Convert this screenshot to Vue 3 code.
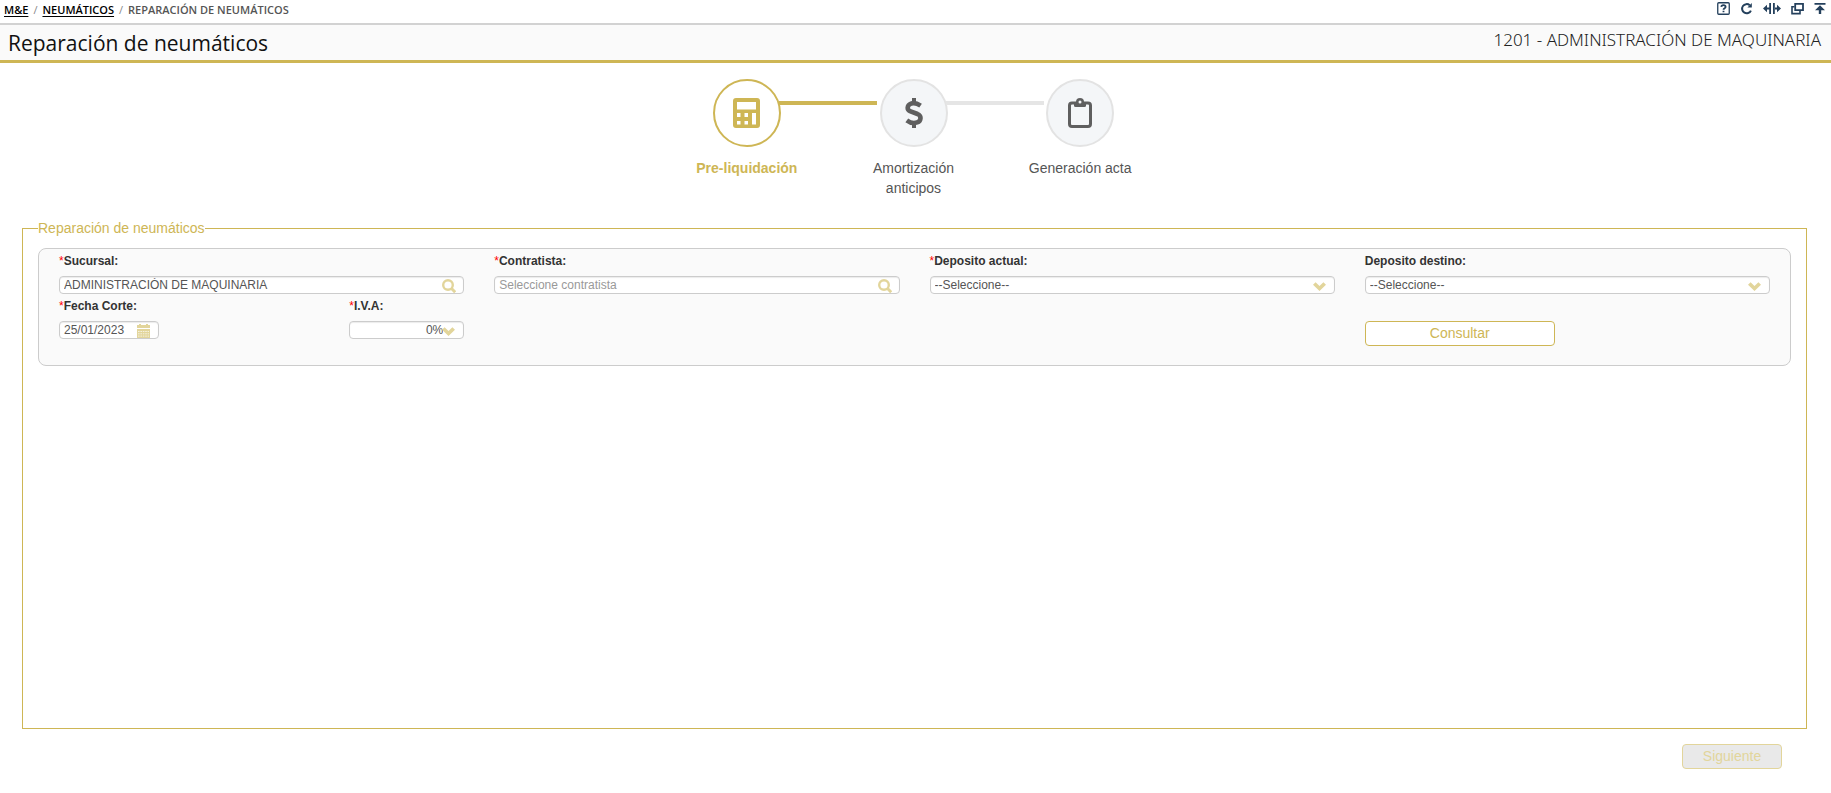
<script setup>
import { ref } from 'vue'

const steps = [
  { id: 'calc', label: 'Pre-liquidación', active: true },
  { id: 'money', label: 'Amortización anticipos', active: false },
  { id: 'clip', label: 'Generación acta', active: false },
]

const sucursal = ref('ADMINISTRACIÓN DE MAQUINARIA')
const contratista = ref('')
const fecha = ref('25/01/2023')
</script>

<template>
  <div class="page">
    <header>
      <div class="topbar">
        <nav class="crumbs" aria-label="Ruta">
          <a href="#">M&amp;E</a><span class="sep">/</span><a href="#">NEUMÁTICOS</a><span class="sep">/</span><span>REPARACIÓN DE NEUMÁTICOS</span>
        </nav>
        <div class="tools">
          <button type="button" aria-label="Ayuda">
            <svg width="13" height="13" viewBox="0 0 13 13" fill="none" stroke="currentColor">
              <rect x="0.75" y="0.75" width="11.5" height="11.5" rx="1" stroke-width="1.3" />
              <path d="M4.3 4.9C4.4 2.6 8.6 2.6 8.6 4.9C8.6 6.2 6.5 6.2 6.5 7.7M6.5 8.8V10.3" stroke-width="1.8" />
            </svg>
          </button>
          <button type="button" aria-label="Recargar">
            <svg width="13" height="13" viewBox="0 0 13 13">
              <path d="M10.9 8.6A4.6 4.6 0 1 1 9.7 3.2" fill="none" stroke="currentColor" stroke-width="2" />
              <path d="M11.8 1V5.4H7.4Z" fill="currentColor" />
            </svg>
          </button>
          <button type="button" aria-label="Ajustar ancho">
            <svg width="18" height="13" viewBox="0 0 18 13" fill="currentColor">
              <path d="M6.2 1H8V12H6.2ZM10 1H11.8V12H10ZM0 6.5L4 2.8V5.4H6.4V7.6H4V10.2ZM18 6.5L14 2.8V5.4H11.6V7.6H14V10.2Z" />
            </svg>
          </button>
          <button type="button" aria-label="Nueva ventana">
            <svg width="13" height="13" viewBox="0 0 13 13" fill="none" stroke="currentColor">
              <path d="M4.2 1.8H12V8.2H4.2Z" stroke-width="1.8" />
              <path d="M3.5 4.7H1V11.6H9V8.5" stroke-width="1.6" />
            </svg>
          </button>
          <button type="button" aria-label="Ir arriba">
            <svg width="12" height="13" viewBox="0 0 12 13" fill="currentColor">
              <path d="M0.5 1H11.5V2.8H0.5ZM6 3.2L11 8.2H7.2V12H4.8V8.2H1Z" />
            </svg>
          </button>
        </div>
      </div>
      <div class="titlebar">
        <h1>Reparación de neumáticos</h1>
        <span class="branch">1201 - ADMINISTRACIÓN DE MAQUINARIA</span>
      </div>
    </header>

    <ol class="steps">
      <li v-for="step in steps" :key="step.id" :class="{ active: step.active }">
        <span class="circle">
          <svg v-if="step.id === 'calc'" width="27" height="30" viewBox="0 0 27 30">
            <path fill="currentColor" fill-rule="evenodd" d="M3 0H24Q27 0 27 3V27Q27 30 24 30H3Q0 30 0 27V3Q0 0 3 0ZM4 4V11.5H23V4ZM4 15V19H7.5V15ZM11.5 15V19H15V15ZM4 23V26.5H7.5V23ZM11.5 23V26.5H15V23ZM19 15V26.5H23V15Z" />
          </svg>
          <svg v-else-if="step.id === 'money'" width="18" height="30" viewBox="0 0 18 30" fill="none" stroke="currentColor">
            <path d="M9 0V5M9 25V30" stroke-width="4" />
            <path d="M15.6 7.6C12 5.2 8.5 4.6 6 5.6C2 7.3 1.6 11.5 5 13.2L12.5 16C17 18 16 23 12.2 24.4C9 25.6 4.8 24.6 1.8 22.3" stroke-width="4.6" />
          </svg>
          <svg v-else width="24" height="30" viewBox="0 0 24 30">
            <path fill="none" stroke="currentColor" stroke-width="3" d="M4 5H20Q22.5 5 22.5 7.5V26Q22.5 28.5 20 28.5H4Q1.5 28.5 1.5 26V7.5Q1.5 5 4 5Z" />
            <path fill="currentColor" d="M6 4H18V7.5Q18 9 16.5 9H7.5Q6 9 6 7.5Z" />
            <circle cx="12" cy="4" r="4" fill="currentColor" />
            <circle class="hole" cx="12" cy="4" r="1.5" />
          </svg>
        </span>
        <span class="caption">{{ step.label }}</span>
      </li>
    </ol>

    <fieldset>
      <legend>Reparación de neumáticos</legend>
      <form class="panel" @submit.prevent>
        <div class="field">
          <label for="sucursal"><i>*</i>Sucursal:</label>
          <div class="control">
            <input id="sucursal" v-model="sucursal" type="text">
            <svg class="glyph search" width="14" height="14" viewBox="0 0 14 14" fill="none" stroke="currentColor"><circle cx="6" cy="6" r="4.8" stroke-width="2.4" /><path d="M9.3 9.3L13.2 13.2" stroke-width="3" /></svg>
          </div>
        </div>
        <div class="field">
          <label for="contratista"><i>*</i>Contratista:</label>
          <div class="control">
            <input id="contratista" v-model="contratista" type="text" placeholder="Seleccione contratista">
            <svg class="glyph search" width="14" height="14" viewBox="0 0 14 14" fill="none" stroke="currentColor"><circle cx="6" cy="6" r="4.8" stroke-width="2.4" /><path d="M9.3 9.3L13.2 13.2" stroke-width="3" /></svg>
          </div>
        </div>
        <div class="field">
          <label for="actual"><i>*</i>Deposito actual:</label>
          <div class="control">
            <select id="actual"><option>--Seleccione--</option></select>
            <svg class="glyph" width="13" height="9" viewBox="0 0 13 9"><path fill="currentColor" d="M0 2.8L2.6 0.2L6.5 4L10.4 0.2L13 2.8L6.5 9Z" /></svg>
          </div>
        </div>
        <div class="field">
          <label for="destino">Deposito destino:</label>
          <div class="control">
            <select id="destino"><option>--Seleccione--</option></select>
            <svg class="glyph" width="13" height="9" viewBox="0 0 13 9"><path fill="currentColor" d="M0 2.8L2.6 0.2L6.5 4L10.4 0.2L13 2.8L6.5 9Z" /></svg>
          </div>
        </div>
        <div class="pair">
          <div class="field date">
            <label for="fecha"><i>*</i>Fecha Corte:</label>
            <div class="control">
              <input id="fecha" v-model="fecha" type="text">
              <svg class="glyph" width="13" height="14" viewBox="0 0 13 14">
                <path fill="currentColor" d="M0 1H2V0H4V1H9V0H11V1H13V4H0ZM0 5H13V14H0Z" />
                <path stroke="#fff" stroke-width="0.7" stroke-dasharray="1.6 0.8" d="M1 7.5H12M1 9.8H12M1 12.1H12" />
              </svg>
            </div>
          </div>
          <div class="field iva">
            <label for="iva"><i>*</i>I.V.A:</label>
            <div class="control">
              <select id="iva"><option>0%</option></select>
              <svg class="glyph" width="13" height="9" viewBox="0 0 13 9"><path fill="currentColor" d="M0 2.8L2.6 0.2L6.5 4L10.4 0.2L13 2.8L6.5 9Z" /></svg>
            </div>
          </div>
        </div>
        <div class="query">
          <button type="submit" class="btn">Consultar</button>
        </div>
      </form>
    </fieldset>

    <footer>
      <button type="button" class="btn next" disabled>Siguiente</button>
    </footer>
  </div>
</template>

<style>
body {
  margin: 0;
  background: #fff;
}
</style>

<style scoped>
* {
  box-sizing: border-box;
}
.page {
  min-height: 100vh;
  display: flex;
  flex-direction: column;
  font-family: "Liberation Sans", Arial, sans-serif;
  font-size: 14px;
  color: #555;
}
.topbar {
  display: flex;
  justify-content: space-between;
  height: 23px;
  padding: 0 5px 0 4px;
}
.crumbs {
  font: 600 11px/20px "Open Sans", "Noto Sans", sans-serif;
  color: #555;
}
.crumbs a {
  color: #000;
  text-decoration: underline;
  text-underline-offset: 2px;
}
.sep {
  padding: 0 5px;
  color: #888;
  font-weight: 400;
}
.tools {
  display: flex;
  align-items: flex-start;
  gap: 10px;
  padding-top: 2px;
}
.tools button {
  border: 0;
  padding: 0;
  background: none;
  color: #24405c;
  line-height: 0;
}
.titlebar {
  display: flex;
  justify-content: space-between;
  height: 40px;
  padding: 0 10px 0 8px;
  background: #fafafa;
  border-top: 2px solid #d2d2d2;
  border-bottom: 3px solid #ceb655;
}
h1 {
  margin: 0;
  font: 400 21px/36px "Open Sans", "Noto Sans", sans-serif;
  color: #111;
}
.branch {
  font: 300 17px/30px "Noto Sans", "Open Sans", sans-serif;
  color: #222;
}
.steps {
  display: flex;
  align-self: center;
  width: 500px;
  margin: 16px 4px 20px 0;
  padding: 0;
  list-style: none;
}
.steps li {
  position: relative;
  flex: 1;
  display: flex;
  flex-direction: column;
  align-items: center;
  gap: 11px;
}
.circle {
  display: flex;
  align-items: center;
  justify-content: center;
  width: 68px;
  height: 68px;
  border: 2px solid #e3e3e3;
  border-radius: 50%;
  background: #f4f6f8;
  color: #5f5f5f;
}
.hole {
  fill: #f4f6f8;
}
.active .circle {
  border-color: #ceb655;
  background: #fff;
  color: #ceb655;
}
.steps li:not(:last-child)::after {
  content: "";
  position: absolute;
  top: 22px;
  left: calc(50% + 32px);
  width: 98px;
  height: 4px;
  background: #e5e5e5;
}
.steps li.active::after {
  background: #ceb655;
}
.caption {
  width: 110px;
  min-height: 40px;
  line-height: 20px;
  text-align: center;
}
.active .caption {
  font-weight: 700;
  color: #ceb655;
}
fieldset {
  flex: 1;
  min-width: 0;
  margin: 0 24px 0 22px;
  padding: 10px 15px;
  border: 1px solid #ceb655;
}
legend {
  padding: 0;
  line-height: 20px;
  color: #ceb655;
}
.panel {
  display: grid;
  grid-template-columns: repeat(4, minmax(0, 1fr));
  gap: 2px 30px;
  padding: 2px 20px 19px;
  border: 1px solid #ccc;
  border-radius: 8px;
  background: #fafafa;
}
.field {
  display: flex;
  flex-direction: column;
  gap: 5px;
}
label {
  font-size: 12px;
  font-weight: 700;
  line-height: 20px;
  color: #333;
}
label i {
  font-style: normal;
  font-weight: 400;
  color: #f00;
}
.control {
  position: relative;
  height: 18px;
}
input,
select {
  display: block;
  width: 100%;
  height: 18px;
  margin: 0;
  padding: 0 4px;
  border: 1px solid #ccc;
  border-radius: 4px;
  background: #fff;
  box-shadow: inset 0 1px 1px rgba(0, 0, 0, 0.08);
  font: 12px/16px "Liberation Sans", Arial, sans-serif;
  color: #555;
  appearance: none;
}
input::placeholder {
  color: #999;
  opacity: 1;
}
.glyph {
  position: absolute;
  right: 9px;
  bottom: 1px;
  color: #e2d59b;
  pointer-events: none;
}
.search {
  right: 8px;
}
select + .glyph {
  bottom: 3px;
}
.pair {
  display: flex;
  justify-content: space-between;
}
.date {
  width: 100px;
}
.iva {
  width: 115px;
}
.iva select {
  padding-right: 20px;
  text-align: right;
  text-align-last: right;
}
.query {
  grid-column: 4;
  padding-top: 25px;
}
.btn {
  display: block;
  width: 190px;
  height: 25px;
  padding: 0 0 2px;
  border: 1px solid #ceb655;
  border-radius: 4px;
  background: #fff;
  font: 14px/20px "Liberation Sans", Arial, sans-serif;
  color: #ceb655;
}
footer {
  display: flex;
  justify-content: flex-end;
  padding: 15px 49px 24px;
}
.btn.next {
  width: 100px;
  border-color: #e2d59b;
  background: #e9e9e9;
  color: #e2d59b;
}
</style>
